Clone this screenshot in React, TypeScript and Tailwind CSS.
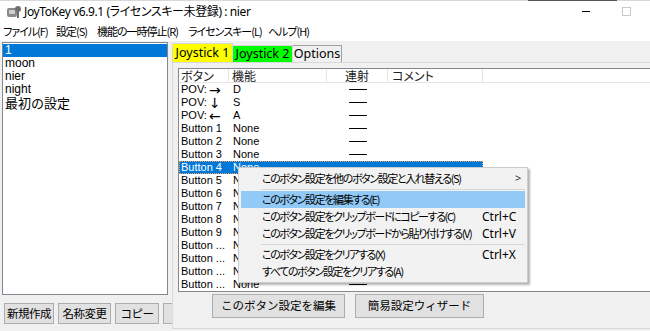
import React from 'react';

const rows: [string, string, string][] = [
  ['POV: ', '→', 'D'],
  ['POV: ', '↓', 'S'],
  ['POV: ', '←', 'A'],
  ['Button 1', '', 'None'],
  ['Button 2', '', 'None'],
  ['Button 3', '', 'None'],
  ['Button 4', '', 'None'],
  ['Button 5', '', 'None'],
  ['Button 6', '', 'None'],
  ['Button 7', '', 'None'],
  ['Button 8', '', 'None'],
  ['Button 9', '', 'None'],
  ['Button ...', '', 'None'],
  ['Button ...', '', 'None'],
  ['Button ...', '', 'None'],
  ['Button ...', '', 'None'],
];

const profiles = ['1', 'moon', 'nier', 'night'];

const menuItems = [
  { label: 'このボタン設定を他のボタン設定と入れ替える(S)', key: '', sub: true },
  { sep: true },
  { label: 'このボタン設定を編集する(E)', key: '', active: true },
  { label: 'このボタン設定をクリップボードにコピーする(C)', key: 'Ctrl+C' },
  { label: 'このボタン設定をクリップボードから貼り付けする(V)', key: 'Ctrl+V' },
  { sep: true },
  { label: 'このボタン設定をクリアする(X)', key: 'Ctrl+X' },
  { label: 'すべてのボタン設定をクリアする(A)', key: '' },
];

function AppIcon() {
  return (
    <svg width="16" height="16" viewBox="0 0 16 16">
      <rect x="1" y="4" width="10" height="9" rx="2" fill="#8a8a8a" />
      <rect x="3" y="6" width="6" height="4" rx="1" fill="#d0d0d0" />
      <circle cx="12" cy="5" r="3" fill="#6f6f6f" />
      <rect x="11" y="7" width="2" height="7" fill="#6f6f6f" />
    </svg>
  );
}

function WinButton({ children, w }: { children: React.ReactNode; w: string }) {
  return (
    <div className={`${w} h-full flex items-center justify-center border border-[#adadad] bg-[#e1e1e1] text-[11.5px] text-black font-['Noto_Sans_CJK_JP',sans-serif] tracking-[-0.5px]`}>
      {children}
    </div>
  );
}

function ContextMenu() {
  return (
    <div className="absolute left-[238px] top-[167px] w-[290px] border border-[#cccccc] bg-[#f2f2f2] py-[2px] shadow-[2px_2px_2px_rgba(0,0,0,0.3)] text-[11px] text-black">
      {menuItems.map((m, i) =>
        m.sep ? (
          <div key={i} className="h-[4px] flex items-center pl-[22px] pr-[2px]">
            <div className="h-px w-full bg-[#d7d7d7]" />
          </div>
        ) : (
          <div
            key={i}
            className={`mx-[2px] h-[17px] flex items-center pl-[21px] ${m.sub ? 'pr-[4px]' : 'pr-[8px]'} ${m.active ? 'bg-[#91c9f7]' : ''}`}
          >
            <span className="flex-1 whitespace-nowrap font-['Noto_Sans_CJK_JP',sans-serif] [font-feature-settings:'palt'] tracking-[-1.4px]">{m.label}</span>
            {m.key && <span className="w-[35px] font-['Noto_Sans',sans-serif] text-[12px]">{m.key}</span>}
            {m.sub && <span className="w-[6px] text-[11px] text-[#333] font-['Noto_Sans',sans-serif]">&gt;</span>}
          </div>
        )
      )}
    </div>
  );
}

export default function App() {
  return (
    <div className="relative w-[650px] h-[331px] overflow-hidden bg-white flex flex-col text-black">
      {/* stray top edge */}
      <div className="h-px flex shrink-0">
        <div className="w-[528px] bg-[#d8d8d8]" />
        <div className="w-[89px] bg-[#555555]" />
        <div className="flex-1 bg-[#d8d8d8]" />
      </div>

      {/* title bar */}
      <div className="h-[21px] shrink-0 flex items-center">
        <div className="w-[24px] flex justify-center pl-[3px]">
          <AppIcon />
        </div>
        <span className="whitespace-nowrap text-[12px] font-['Noto_Sans','Noto_Sans_CJK_JP',sans-serif] [font-feature-settings:'palt'] tracking-[-0.4px]">
          JoyToKey v6.9.1 (ライセンスキー未登録) : nier
        </span>
        <div className="flex-1" />
        <div className="w-[8px] h-px bg-black mr-[32px]" />
        <div className="w-[9px] h-[9px] border border-[#c8c8c8] mr-[19px]" />
      </div>

      {/* menu bar */}
      <div className="h-[19px] shrink-0 flex items-center whitespace-nowrap text-[11px] font-['Noto_Sans_CJK_JP',sans-serif] [font-feature-settings:'palt'] tracking-[-1px]">
        <span className="ml-[3px] w-[53px]">ファイル(F)</span>
        <span className="w-[41px]">設定(S)</span>
        <span className="w-[91px]">機能の一時停止(R)</span>
        <span className="w-[80px]">ライセンスキー(L)</span>
        <span>ヘルプ(H)</span>
      </div>

      {/* client area */}
      <div className="flex-1 bg-[#f0f0f0] flex">
        {/* left */}
        <div className="w-[172px] shrink-0 flex flex-col">
          <div className="ml-[2px] mt-[1px] w-[166px] h-[253px] border border-[#828790] bg-white pt-[1px]">
            {profiles.map((p, i) => (
              <div
                key={p}
                className={`h-[13px] leading-[13px] pl-[2px] text-[12px] font-['Liberation_Sans',sans-serif] ${i === 0 ? 'bg-[#0078d7] text-white' : ''}`}
              >
                {p}
              </div>
            ))}
            <div className="h-[14px] leading-[14px] pl-[2px] text-[13px] font-['Noto_Sans_CJK_JP',sans-serif]">最初の設定</div>
          </div>
          <div className="mt-[8px] h-[21px] flex pl-[4px] gap-[4px]">
            <WinButton w="w-[50px]">新規作成</WinButton>
            <WinButton w="w-[53px]">名称変更</WinButton>
            <WinButton w="w-[44px]">コピー</WinButton>
            <div className="flex-1 border-l border-y border-[#adadad] bg-[#e1e1e1]" />
          </div>
        </div>

        {/* right: tab control */}
        <div className="w-[490px] shrink-0 flex flex-col pt-[2px]">
          <div className="h-[19px] flex items-end text-[12.5px] font-['Noto_Sans',sans-serif]">
            <div className="w-[61px] h-[19px] bg-[#ffff00] border-x border-t border-[#d9d9d9] flex items-center justify-center">Joystick 1</div>
            <div className="w-[60px] h-[17px] bg-[#00ff00] border-t border-r border-[#d9d9d9] flex items-center justify-center">Joystick 2</div>
            <div className="w-[49px] h-[17px] bg-[#f0f0f0] border-t border-r border-[#a0a0a0] flex items-center justify-center">Options</div>
          </div>
          <div className="h-[267px] border border-[#d9d9d9] flex flex-col pl-[5px] pt-[5px]">
            {/* list view */}
            <div className="h-[224px] border-l border-t border-b border-[#828790] bg-white flex flex-col text-[11px]">
              <div className="h-[14px] flex border-b border-[#e5e5e5] font-['Noto_Sans_CJK_JP',sans-serif] [font-feature-settings:'palt'] text-[12px] text-[#222]">
                <div className="w-[50px] pl-[2px] border-r border-[#e5e5e5] leading-[13px]">ボタン</div>
                <div className="w-[98px] pl-[3px] border-r border-[#e5e5e5] leading-[13px]">機能</div>
                <div className="w-[61px] text-center border-r border-[#e5e5e5] leading-[13px]">連射</div>
                <div className="w-[95px] pl-[4px] border-r border-[#e5e5e5] leading-[13px]">コメント</div>
                <div className="flex-1" />
              </div>
              {rows.map(([b, arrow, f], i) => {
                const sel = i === 6;
                return (
                  <div key={i} className="h-[13px] flex font-['Liberation_Sans','DejaVu_Sans',sans-serif]">
                    <div className={`w-[304px] flex ${sel ? 'bg-[#0078d7] text-white outline-1 outline-dotted outline-[#f0a060] -outline-offset-1' : ''}`}>
                      <div className="w-[50px] h-[13px] pl-[2px] flex items-center whitespace-nowrap">
                        <span>{b}</span>
                        {arrow && <span className="ml-[2px] font-['DejaVu_Sans',sans-serif] text-[14px] leading-none">{arrow}</span>}
                      </div>
                      <div className="w-[98px] pl-[4px] leading-[13px]">{f}</div>
                      <div className="w-[61px] flex items-center justify-center">
                        <div className={`w-[18px] h-px ${sel ? 'bg-white' : 'bg-black'}`} />
                      </div>
                    </div>
                  </div>
                );
              })}
            </div>
            {/* buttons */}
            <div className="mt-[2px] h-[24px] flex pl-[34px] gap-[10px]">
              <div className="w-[133px] h-full flex items-center justify-center border border-[#adadad] bg-[#e1e1e1] text-[11.5px] font-['Noto_Sans_CJK_JP',sans-serif]">このボタン設定を編集</div>
              <div className="w-[129px] h-full flex items-center justify-center border border-[#adadad] bg-[#e1e1e1] text-[11.5px] font-['Noto_Sans_CJK_JP',sans-serif]">簡易設定ウィザード</div>
            </div>
          </div>
        </div>
      </div>

      <ContextMenu />
    </div>
  );
}
